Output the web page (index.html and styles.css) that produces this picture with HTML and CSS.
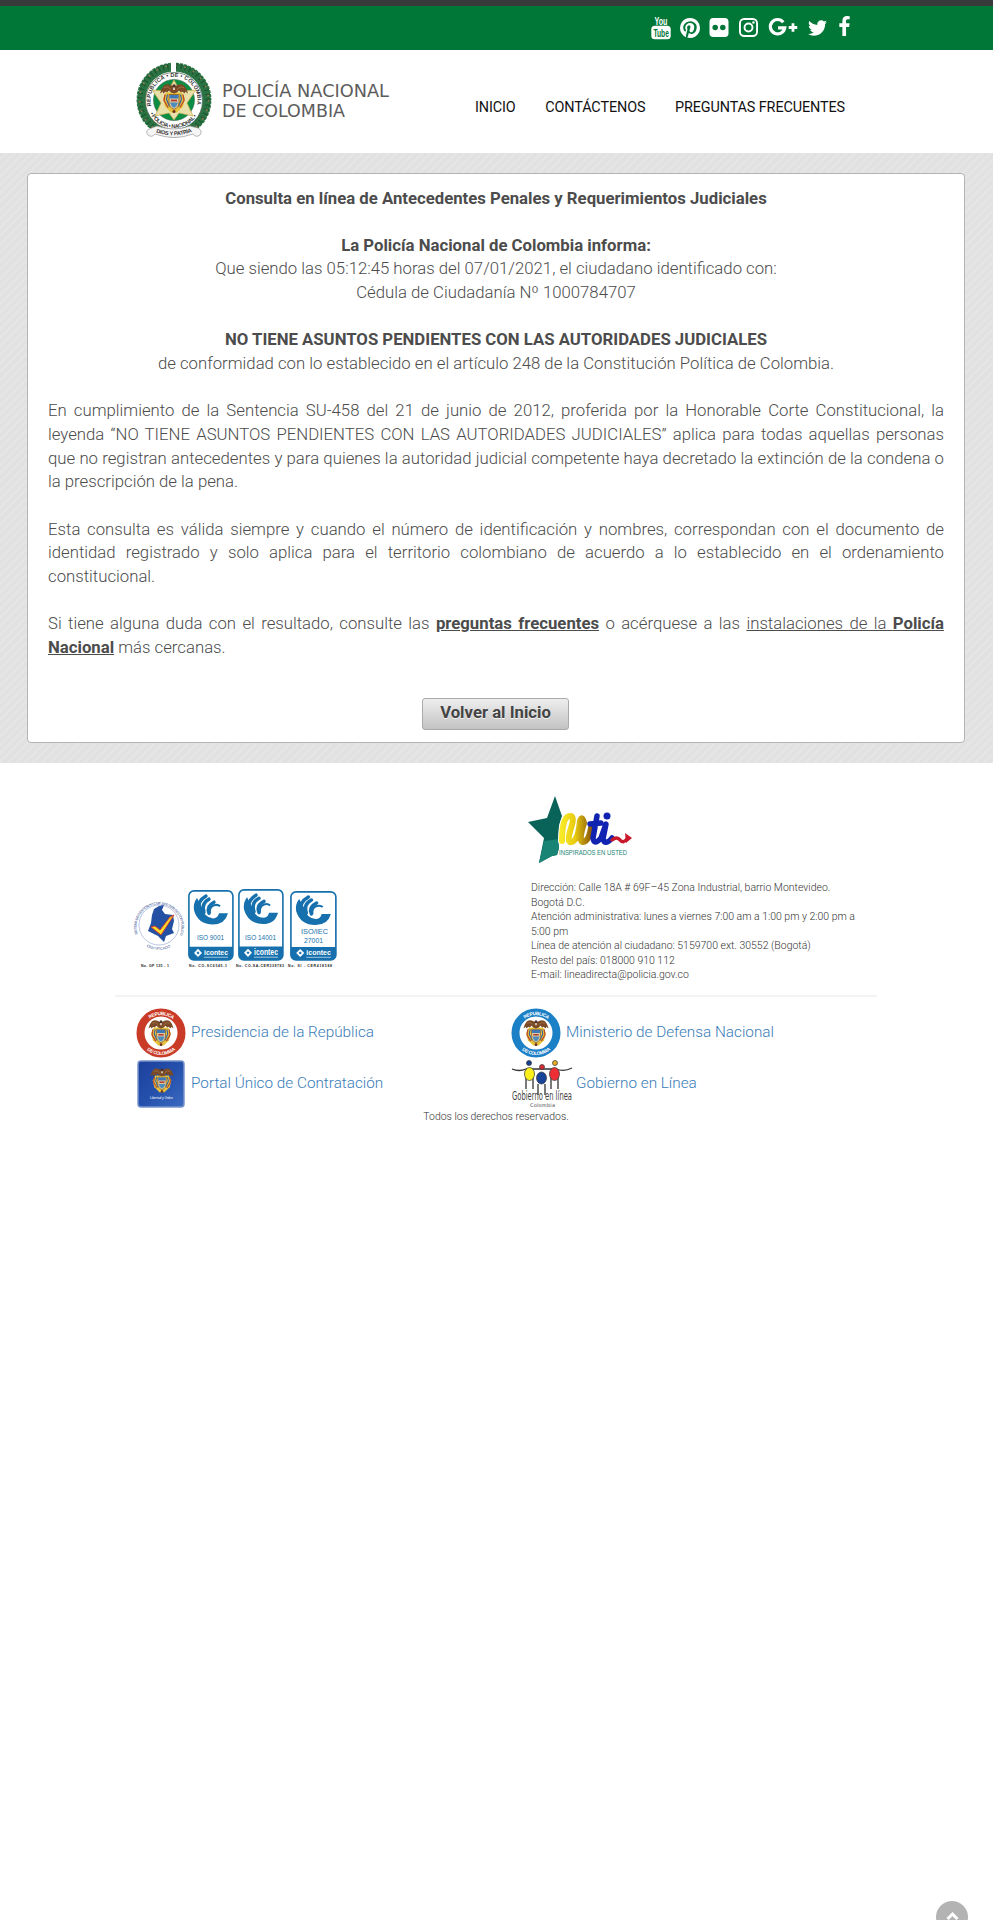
FILE: index.html
```html
<!DOCTYPE html>
<html lang="es">
<head>
<meta charset="utf-8">
<title>Policía Nacional de Colombia - Antecedentes</title>
<link rel="stylesheet" href="styles.css">
</head>
<body>
<svg class="defs" width="0" height="0" aria-hidden="true">
  <defs>
    <linearGradient id="gold" x1="0" x2="1"><stop offset="0" stop-color="#f7e928"/><stop offset=".45" stop-color="#e8cb10"/><stop offset="1" stop-color="#8d5c08"/></linearGradient>
    <linearGradient id="navy" x1="0" y1="0" x2="1" y2="1"><stop offset="0" stop-color="#1c409b"/><stop offset=".5" stop-color="#2450ac"/><stop offset="1" stop-color="#3b6bc0"/></linearGradient>
    <symbol id="coat" viewBox="0 0 30 32">
      <path d="M7 10L4 16l2 8 6 6h6l6-6 2-8-3-6z" fill="#e8c33a"/>
      <path d="M6 12l-1 6 4 7M24 12l1 6-4 7" fill="none" stroke="#b9452b" stroke-width="1.300"/>
      <path d="M8.500 12l-1 5 3 7M21.500 12l1 5-3 7" fill="none" stroke="#2f5fa8" stroke-width="1.200"/>
      <path d="M10 12h10v8q0 5-5 7q-5-2-5-7z" fill="#d9c9a0" stroke="#8a5a1c" stroke-width=".8"/>
      <path d="M10.500 12.500h9v3.500h-9z" fill="#3f78b8"/><path d="M11 20h8q-1 4-4 5.500q-3-1.500-4-5.500z" fill="#4c8dbd"/>
      <path d="M12 18h6" stroke="#b83a2d" stroke-width="1.800"/>
      <path d="M14 4Q9 0 5 3 2 6 1 11l3-2 0 2 3-2 1 1 2-2 2 2 3 1 3-1 2-2 2 2 1-1 3 2 0-2 3 2Q28 6 25 3 21 0 16 4z" fill="#7a4a28"/>
      <path d="M5 5q4-2 7 2M25 5q-4-2-7 2" fill="none" stroke="#a87747" stroke-width=".8"/>
      <circle cx="15" cy="3.500" r="1.700" fill="#4b3023"/><path d="M14.200 5h1.600v2.500h-1.600z" fill="#f3ead8"/><circle cx="15" cy="29" r="1.500" fill="#6b2d20"/>
    </symbol>
    <symbol id="iso" viewBox="0 0 46 70" preserveAspectRatio="none">
      <rect x=".9" y=".9" width="44" height="68" rx="5" fill="#fff" stroke="#1670ad" stroke-width="1.600"/>
      <path d="M1 56h44v8q0 5-5 5H6q-5 0-5-5z" fill="#1670ad"/>
      <path d="M40 23q-3 11-15 11Q10 34 6 20q-1-7 3-12l5 9q2 10 11 11 5 0 6-5z" fill="#1670ad"/>
      <path d="M11 20Q9 11 18 6M16 22q-3-9 5-13M21 23q-3-7 5-11" fill="none" stroke="#1670ad" stroke-width="3.400" stroke-linecap="round"/>
      <path d="M22 23q-1-6 4-8 4-1 6 1" fill="none" stroke="#1670ad" stroke-width="2"/>
      <path d="M10 58l4 4-4 4-4-4z" fill="#fff"/><path d="M10 60.500l1.500 1.500-1.500 1.500-1.500-1.500z" fill="#1670ad"/>
      <text x="16" y="64" class="icontec" textLength="24" lengthAdjust="spacingAndGlyphs">icontec</text><path d="M16 66.300h24" stroke="#9fc6df" stroke-width="1"/>
    </symbol>
    <path id="arcTop" d="M7 25A18 18 0 0 1 43 25"/>
    <path id="arcBottom" d="M3 25A22 22 0 0 0 47 25"/>
  </defs>
</svg>

<div class="topbar">
  <nav class="social" aria-label="Redes sociales">
    <svg class="yt" viewBox="0 0 20 24"><text x="3.500" y="8.500" class="yt-you" textLength="13" lengthAdjust="spacingAndGlyphs">You</text><rect x=".3" y="9.700" width="19.400" height="13.600" rx="3.500" fill="#fff"/><text x="2.400" y="20.500" class="yt-tube" textLength="15.500" lengthAdjust="spacingAndGlyphs">Tube</text></svg>
    <svg class="pin" viewBox="128 128 1536 1536"><path fill="#fff" d="M1664 896q0 209-103 385.500t-279.500 279.500-385.500 103q-111 0-218-32 59-93 78-164 9-34 54-211 20 39 73 67.500t114 28.500q121 0 216-68.500t147-188.500 52-270q0-114-59.500-214t-172.500-163-255-63q-105 0-196 29t-154.500 77-109 110.500-67 129.500-21.500 134q0 104 40 183t117 111q30 12 38-20 2-7 8-31t8-30q6-23-11-43-51-61-51-151 0-151 104.500-259.500t273.500-108.500q151 0 235.500 82t84.500 213q0 170-68.500 289t-175.500 119q-61 0-98-43.500t-23-104.500q8-35 26.500-93.500t30-103 11.500-75.500q0-50-27-83t-77-33q-62 0-105 57t-43 142q0 73 25 122l-99 418q-17 70-13 177-206-91-333-281t-127-423q0-209 103-385.500t279.500-279.500 385.500-103 385.500 103 279.500 279.500 103 385.500z"/></svg>
    <svg class="flickr" viewBox="0 0 20 20"><rect width="20" height="20" rx="4" fill="#fff"/><circle cx="6" cy="10" r="2.900" fill="#007637"/><circle cx="14" cy="10" r="2.900" fill="#007637"/></svg>
    <svg class="insta" viewBox="0 0 20 20"><g fill="none" stroke="#fff" stroke-width="2"><rect x="1" y="1" width="18" height="18" rx="4.500"/><circle cx="10" cy="10" r="4.200"/></g><circle cx="15.200" cy="4.800" r="1.300" fill="#fff"/></svg>
    <svg class="gplus" viewBox="0 0 30 20"><path d="M15.300 4.500A7.600 7.600 0 1 0 16.800 10.500H9.800" fill="none" stroke="#fff" stroke-width="3.400"/><path d="M25.500 5.500v9M21 10h9" stroke="#fff" stroke-width="2.900"/></svg>
    <svg class="tw" viewBox="108 256 1576 1280"><path fill="#fff" d="M1684 408q-67 98-162 167 1 14 1 42 0 130-38 259.500t-115.500 248.500-184.500 210.500-258 146-323 54.500q-271 0-496-145 35 4 78 4 225 0 401-138-105-2-188-64.500t-114-159.500q33 5 61 5 43 0 85-11-112-23-185.500-111.500t-73.500-205.500v-4q68 38 146 41-66-44-105-115t-39-154q0-88 44-163 121 149 294.500 238.500t371.500 99.500q-8-38-8-74 0-134 94.500-228.500t228.500-94.500q140 0 236 102 109-21 205-78-37 115-142 178 93-10 186-50z"/></svg>
    <svg class="fb" viewBox="479 0 864 1664"><path fill="#fff" d="M1343 12v264h-157q-86 0-116 36t-30 108v189h293l-39 296h-254v759h-306v-759h-255v-296h255v-218q0-186 104-288.500t277-102.500q147 0 228 12z"/></svg>
  </nav>
</div>

<header class="header">
  <svg class="logo" viewBox="0 0 260 80">
    <g fill="none"><circle cx="39" cy="38" r="33" stroke="#2b7343" stroke-width="9"/><circle cx="39" cy="38" r="37.300" stroke="#fff" stroke-width="1.200" stroke-dasharray="1.200 3"/><circle cx="39" cy="38" r="34" stroke="#1d5a33" stroke-width="5" stroke-dasharray="1.500 3"/><circle cx="39" cy="38" r="34.500" stroke="#a07a52" stroke-width="1.600" stroke-dasharray="1.600 8"/></g>
    <path d="M36 0h5v10h-5z" fill="#fff"/>
    <circle cx="39" cy="39" r="28.500" fill="#fff" stroke="#465c4c" stroke-width=".7"/>
    <circle cx="39" cy="38" r="20.500" fill="#0b8e44" stroke="#406850" stroke-width=".6"/>
    <path id="lt" d="M16.500 45A23.500 23.500 0 1 1 61.500 45" fill="none"/><path id="lb" d="M13.500 48A27 27 0 0 0 64.500 48" fill="none"/>
    <text class="seal"><textPath href="#lt" startOffset="1" textLength="84">REPUBLICA • DE • COLOMBIA</textPath></text>
    <text class="seal"><textPath href="#lb" startOffset="4" textLength="56">• POLICIA • NACIONAL •</textPath></text>
    <path d="M39 18l6 11 16-1-9 13 6 13-14-3-5 7-5-7-14 3 6-13-9-13 16 1z" fill="#e9dfaa" stroke="#c5a947" stroke-width=".7"/>
    <use href="#coat" x="24" y="18" width="30" height="37"/>
    <path d="M14 67q-4 2-1 6 4 3 7-1 19 7 38 0 3 4 7 1 3-4-2-7l-8-2q-16 6-33 0z" fill="#f5f5f5" stroke="#999" stroke-width=".7"/>
    <path id="motto" d="M20 70Q39 77 59 69" fill="none"/><text class="seal"><textPath href="#motto" startOffset="1" textLength="37">DIOS Y PATRIA</textPath></text>
    <text x="87" y="34.500" class="brand" textLength="167" lengthAdjust="spacingAndGlyphs">POLICÍA NACIONAL</text>
    <text x="87" y="55" class="brand" textLength="123" lengthAdjust="spacingAndGlyphs">DE COLOMBIA</text>
  </svg>
  <nav class="menu"><a>INICIO</a><a>CONTÁCTENOS</a><a>PREGUNTAS FRECUENTES</a></nav>
</header>

<main class="stage">
  <section class="card">
    <div class="centered">
      <p><b>Consulta en línea de Antecedentes Penales y Requerimientos Judiciales</b></p>
      <p><b>La Policía Nacional de Colombia informa:</b><br>Que siendo las 05:12:45 horas del 07/01/2021, el ciudadano identificado con:<br>Cédula de Ciudadanía Nº 1000784707</p>
      <p><b>NO TIENE ASUNTOS PENDIENTES CON LAS AUTORIDADES JUDICIALES</b><br>de conformidad con lo establecido en el artículo 248 de la Constitución Política de Colombia.</p>
    </div>
    <p class="justified"><span>En cumplimiento de la Sentencia SU-458 del 21 de junio de 2012, proferida por la Honorable Corte Constitucional, la</span> <span>leyenda “NO TIENE ASUNTOS PENDIENTES CON LAS AUTORIDADES JUDICIALES” aplica para todas aquellas personas</span> <span>que no registran antecedentes y para quienes la autoridad judicial competente haya decretado la extinción de la condena o</span> <span>la prescripción de la pena.</span></p>
    <p class="justified"><span>Esta consulta es válida siempre y cuando el número de identificación y nombres, correspondan con el documento de</span> <span>identidad registrado y solo aplica para el territorio colombiano de acuerdo a lo establecido en el ordenamiento</span> <span>constitucional.</span></p>
    <p class="justified"><span>Si tiene alguna duda con el resultado, consulte las <a><b>preguntas frecuentes</b></a> o acérquese a las <a>instalaciones de la <b>Policía</b></a></span> <span><a><b>Nacional</b></a> más cercanas.</span></p>
    <button class="back">Volver al Inicio</button>
  </section>
</main>

<footer class="footer">
  <div class="info">
    <svg class="certs" viewBox="0 0 210 82">
      <path id="ct" d="M7 48A22.500 22.500 0 1 1 49 48" fill="none"/><path id="cb" d="M4 46A25.500 25.500 0 0 0 52 46" fill="none"/>
      <circle cx="28" cy="38" r="20" fill="none" stroke="#8ea1cb" stroke-width=".6"/>
      <text class="cert-ring"><textPath href="#ct" startOffset="1" textLength="86">SISTEMA DE GESTIÓN NTCGP 1000:2009 SECTOR PÚBLICO</textPath></text>
      <text class="cert-ring"><textPath href="#cb" startOffset="18" textLength="25">CERTIFICADO</textPath></text>
      <path d="M23 22l5-3 5-1-2 5 3 4 8 1 1 6-2 8 2 4-8 3-2 6-6-6-10-5 3-8 1-8z" fill="#2450a4"/>
      <path d="M20 40l4-1 5 4 10-13 4-2-13 20z" fill="#f7dc29" stroke="#d23b31" stroke-width="1"/>
      <use href="#iso" x="57" y="3" width="46" height="71"/><use href="#iso" x="107" y="2" width="46" height="72"/><use href="#iso" x="159" y="4" width="47" height="70"/>
      <text x="66" y="52.500" class="iso-name" textLength="27" lengthAdjust="spacingAndGlyphs">ISO 9001</text>
      <text x="114" y="52.500" class="iso-name" textLength="31" lengthAdjust="spacingAndGlyphs">ISO 14001</text>
      <text x="170" y="47" class="iso-small" textLength="27" lengthAdjust="spacingAndGlyphs">ISO/IEC</text><text x="173" y="55.500" class="iso-small" textLength="19" lengthAdjust="spacingAndGlyphs">27001</text>
      <text x="10" y="79.500" class="certno" textLength="28">No. GP 135 - 1</text><text x="58" y="79.500" class="certno" textLength="38">No. CO-SC6545-1</text><text x="105" y="79.500" class="certno" textLength="48">No. CO-SA-CER339783</text><text x="157" y="79.500" class="certno" textLength="44">No. SI - CER418588</text>
    </svg>
    <div class="contact">
      <svg class="mti" viewBox="0 0 106 68">
        <path d="M27 0l7 20-3 10v22l-2 7-5 1-13 7 5-25L0 26l19-4z" fill="#0a6359"/><path d="M16 45l15-2v9l-2 7-5 1-13 7z" fill="#198474"/>
        <g fill="none" stroke-linecap="round" stroke-linejoin="round"><path d="M34 45q0-25 8-25 5 0 1 12-5 16 1 14Q50 44 52 25q2-6 4 2-6 19-1 19 6-1 8-14" stroke="#fff" stroke-width="8"/><path d="M34 45q0-25 8-25 5 0 1 12-5 16 1 14Q50 44 52 25q2-6 4 2-6 19-1 19 6-1 8-14" stroke="url(#gold)" stroke-width="6"/><path d="M69 20l-4 22q1 8 8 0l5-14-3 15q2 7 9-1M62 28l11-1" stroke="#1024b1" stroke-width="5.500"/><path d="M84 44q5-4 8 0t7-1" stroke="#c9182b" stroke-width="3.500"/></g>
        <path d="M97 37l7 5-6 5z" fill="#c9182b"/><circle cx="79" cy="20" r="3.500" fill="#1024b1"/>
        <text x="31" y="59" class="mti-text" textLength="68" lengthAdjust="spacingAndGlyphs">INSPIRADOS EN USTED</text>
      </svg>
      <address>Dirección: Calle 18A # 69F–45 Zona Industrial, barrio Montevideo.<br>Bogotá D.C.<br>Atención administrativa: lunes a viernes 7:00 am a 1:00 pm y 2:00 pm a<br>5:00 pm<br>Línea de atención al ciudadano: 5159700 ext. 30552 (Bogotá)<br>Resto del país: 018000 910 112<br>E-mail: lineadirecta@policia.gov.co</address>
    </div>
  </div>
  <div class="links">
    <a><svg class="seal-icon" viewBox="0 0 50 50"><circle cx="25" cy="25" r="20.500" fill="#fff" stroke="#c93b26" stroke-width="8"/><text class="ring"><textPath href="#arcTop" startOffset="16" textLength="25">REPUBLICA</textPath></text><text class="ring"><textPath href="#arcBottom" startOffset="19" textLength="31">DE COLOMBIA</textPath></text><use href="#coat" x="11.500" y="10" width="27" height="30"/></svg><span>Presidencia de la República</span></a>
    <a><svg class="seal-icon" viewBox="0 0 50 50"><circle cx="25" cy="25" r="20.500" fill="#fff" stroke="#1b80c6" stroke-width="8"/><text class="ring"><textPath href="#arcTop" startOffset="16" textLength="25">REPUBLICA</textPath></text><text class="ring"><textPath href="#arcBottom" startOffset="19" textLength="31">DE COLOMBIA</textPath></text><use href="#coat" x="11.500" y="10" width="27" height="30"/></svg><span>Ministerio de Defensa Nacional</span></a>
    <a><svg class="seal-icon" viewBox="0 0 50 50"><rect x="2" y="2" width="46" height="46" rx="3" fill="url(#navy)" stroke="#7894cb" stroke-width="1.500"/><use href="#coat" x="13" y="8" width="26" height="27"/><text x="14" y="40" class="portal" textLength="23" lengthAdjust="spacingAndGlyphs">Libertad y Orden</text></svg><span>Portal Único de Contratación</span></a>
    <a class="gob-link"><svg class="gob" viewBox="0 0 62 50"><g fill="none" stroke="#333" stroke-width="1.300"><path d="M1 10q7 3 14 0h30q8 3 16-1M15 18v12M22 18v12M27 25v11M34 25v11M40 18v12M47 18v12"/></g><g stroke="#333" stroke-width=".7"><ellipse cx="18.500" cy="15" rx="5" ry="6.500" fill="#f9ef19"/><ellipse cx="30.500" cy="19" rx="5" ry="6" fill="#174399"/><ellipse cx="43.500" cy="15" rx="5" ry="6.500" fill="#ed2f35"/><circle cx="18" cy="4" r="2.500" fill="#163f92"/><circle cx="31" cy="8" r="2.500" fill="#d82d35"/><circle cx="44" cy="4" r="2.500" fill="#e8af24"/></g><text x="1" y="41" class="gob-text" textLength="60" lengthAdjust="spacingAndGlyphs">Gobierno en línea</text><text x="19" y="47.500" class="gob-sub" textLength="25">Colombia</text></svg><span>Gobierno en Línea</span></a>
  </div>
  <p class="rights">Todos los derechos reservados.</p>
</footer>
<a class="to-top" aria-label="Subir"><svg viewBox="0 0 32 32"><circle cx="16" cy="16" r="16" fill="#b3b3b3"/><path d="M11.500 18L16.500 13l5 5" fill="none" stroke="#fff" stroke-width="3"/></svg></a>
</body>
</html>
```
FILE: styles.css
```css
* { box-sizing: border-box; }
body { margin: 0; height: 1920px; overflow: hidden; position: relative; background: #fff; color: #4c4c4c; font-family: Roboto, sans-serif; }
p { margin: 0; }
svg { display: block; flex: none; overflow: visible; }
.defs { position: absolute; }

.topbar { height: 50px; border-top: 6px solid #38393b; background: #007637; }
.social { display: flex; align-items: flex-start; margin-left: 651px; }
.social svg { margin-top: 12px; }
.social .yt { width: 20px; height: 24px; margin-top: 10px; }
.pin { width: 20px; height: 20px; margin-left: 9px; }
.flickr { width: 20px; height: 19px; margin-left: 9px; }
.insta { width: 19px; height: 19px; margin-left: 10px; }
.gplus { width: 30px; height: 19px; margin-left: 10px; }
.tw { width: 19px; height: 16px; margin-left: 10px; }
.social .tw { margin-top: 14px; }
.social .fb { width: 11px; height: 20px; margin: 10px 0 0 12px; }
.yt-you, .yt-tube { font: 700 10.500px "Liberation Sans Narrow", "Liberation Sans", sans-serif; fill: #fff; }
.yt-tube { fill: #007637; }

.header { height: 103px; display: flex; padding: 12px 0 0 135px; }
.logo { width: 260px; height: 80px; }
.seal { font: 700 5.500px "Liberation Sans", sans-serif; fill: #333; }
.brand { font: 17.500px "DejaVu Sans", sans-serif; fill: #5c5c5c; }
.menu { display: flex; gap: 29.500px; margin-left: 80px; padding-top: 37px; font-size: 14.400px; line-height: 18px; color: #111; white-space: nowrap; letter-spacing: -.1px; }

.stage { height: 610px; padding: 20px 28px 20px 27px; background: repeating-linear-gradient(135deg, #e1e1e1 0 3px, #e5e5e5 4px 6px); }
.card { height: 570px; padding: 12.500px 20px; border: 1.500px solid #b4b4b4; border-radius: 4px; background: #fff; font-size: 16.740px; font-weight: 300; line-height: 23.650px; }
.card p { margin-bottom: 23.650px; }
.card b { font-weight: 700; }
.centered { text-align: center; white-space: nowrap; }
.justified span { display: block; white-space: nowrap; text-align: justify; text-align-last: justify; }
.justified span:last-child { text-align-last: left; }
.justified a { text-decoration: underline; }
.back { display: block; width: 147px; height: 32px; margin: 38px auto 0 374px; padding: 0 0 2px; border: 1px solid #aaa; border-radius: 3px; background: linear-gradient(#eee, #c3c3c3); color: #444; font: 700 16.700px Roboto, sans-serif; text-shadow: 0 1px 0 #f5f5f5; white-space: nowrap; }

.footer { width: 762px; margin-left: 115px; }
.info { height: 234px; display: flex; padding: 32px 0 0 16px; border-bottom: 2px solid #f3f3f3; }
.certs { width: 210px; height: 82px; margin: 92px 187px 0 0; }
.mti { width: 106px; height: 68px; margin-top: 1px; }
address { margin: 17px 0 0 3px; font: 300 10.480px/14.500px Roboto, sans-serif; white-space: nowrap; color: #333; }
.icontec { font: 700 8px "Liberation Sans", sans-serif; fill: #fff; }
.iso-name { font: 7px "Liberation Sans", sans-serif; fill: #1670ad; }
.iso-small { font: 6.500px "Liberation Sans", sans-serif; fill: #1670ad; }
.certno { font: 700 3.500px "Liberation Sans", sans-serif; fill: #222; }
.cert-ring { font: 3.500px "Liberation Sans", sans-serif; fill: #2b488c; }
.mti-text { font: 7px "Liberation Sans", sans-serif; fill: #198474; }
.links { display: grid; grid-template-columns: 375px 1fr; grid-template-rows: 51px 51px; padding: 10px 0 0 21px; font-size: 15.300px; font-weight: 300; color: #397cb8; }
.links a { display: flex; align-items: center; gap: 5px; white-space: nowrap; }
.links span { padding-bottom: 2px; }
.links .gob-link { gap: 3px; }
.seal-icon { width: 50px; height: 50px; }
.gob { width: 62px; height: 50px; }
.ring { font: 700 4.800px "Liberation Sans", sans-serif; fill: #fff; }
.portal { font: 3.800px "Liberation Sans", sans-serif; fill: #fff; }
.gob-text { font: 12px "DejaVu Sans Condensed", sans-serif; fill: #444; }
.gob-sub { font: 5px "DejaVu Sans", sans-serif; fill: #444; }
.rights { font-size: 10.480px; line-height: 15px; text-align: center; font-weight: 300; color: #333; }
.to-top { position: absolute; left: 936px; top: 1901px; width: 32px; height: 32px; }
```
